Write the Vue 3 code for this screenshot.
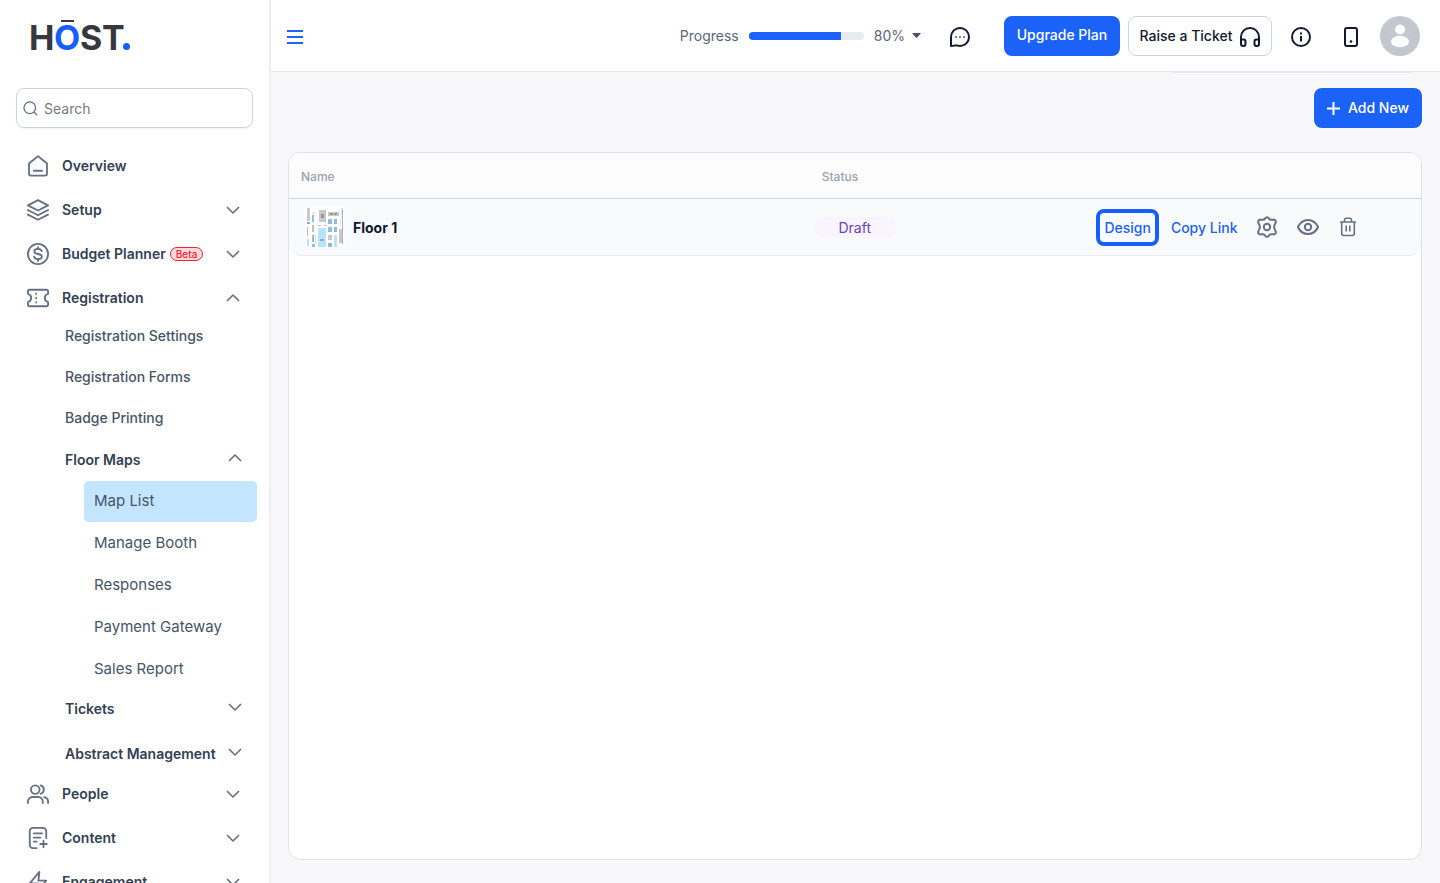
<template>
  <div class="layout">
    <aside class="sidebar">
      <a class="logo" href="#" aria-label="HOST">
        <svg width="120" height="60" viewBox="0 0 120 60">
          <g font-family="Inter, sans-serif" font-size="34" font-weight="700" fill="#363840">
            <text x="9" y="50">H</text>
            <text x="34" y="50" fill="#155eff">O</text>
            <text x="60" y="50">S</text>
            <text x="82" y="50">T</text>
          </g>
          <rect x="41" y="20" width="13" height="2" fill="#363840" />
          <circle cx="106.500" cy="46.500" r="3.500" fill="#155eff" />
        </svg>
      </a>

      <label class="search">
        <svg class="search-icon" viewBox="0 0 16 16"><circle cx="7.2" cy="7.2" r="6.2" /><path d="M12 12l2.6 2.6" /></svg>
        <input type="search" placeholder="Search" aria-label="Search">
      </label>

      <nav class="menu">
        <template v-for="item in menu" :key="item.name">
          <button class="menu-item" type="button">
            <svg class="menu-icon" viewBox="0 0 24 24"><path v-for="d in item.icon" :key="d" :d="d" /></svg>
            <span class="menu-name">{{ item.name }}</span>
            <span v-if="item.beta" class="beta">Beta</span>
            <svg v-if="!item.single" class="chevron" :class="{ open: item.children }" viewBox="0 0 14 8"><path d="M1 1l6 6 6-6" /></svg>
          </button>
          <div v-if="item.children" class="sub-menu">
            <template v-for="sub in item.children" :key="sub.name">
              <button v-if="sub.group" class="sub-group" type="button">
                <span>{{ sub.name }}</span>
                <svg class="chevron" :class="{ open: sub.children }" viewBox="0 0 14 8"><path d="M1 1l6 6 6-6" /></svg>
              </button>
              <a v-else class="sub-link" href="#">{{ sub.name }}</a>
              <div v-if="sub.children" class="nested">
                <a
                  v-for="name in sub.children"
                  :key="name"
                  href="#"
                  class="nested-link"
                  :class="{ active: name === current }"
                >{{ name }}</a>
              </div>
            </template>
          </div>
        </template>
      </nav>
    </aside>

    <div class="main">
      <header class="topbar">
        <button class="icon-btn burger" type="button" aria-label="Toggle menu">
          <svg width="16" height="14" viewBox="0 0 16 14"><path d="M0 1h16M0 7h16M0 13h16" /></svg>
        </button>

        <div class="progress">
          <span>Progress</span>
          <div class="progress-track">
            <div class="progress-bar" :style="{ width: progress + '%' }"></div>
          </div>
          <span>{{ progress }}%</span>
          <button class="icon-btn caret" type="button" aria-label="Show progress">
            <svg width="9" height="5" viewBox="0 0 9 5"><path d="M0.6 0h7.8q.8 0 .3.6L5.1 4.6q-.6.6-1.2 0L.3.6Q-.2 0 .6 0z" /></svg>
          </button>
        </div>

        <button class="icon-btn chat" type="button" aria-label="Messages">
          <svg width="22" height="22" viewBox="0 0 22 22">
            <path d="M2 20V11a9 9 0 1 1 9 9c-2 0-3-.9-4.600-.6C5 19.600 3.500 20 2 20z" />
            <path class="dots" d="M6.300 11h1.400M10.300 11h1.400M14.300 11h1.400" />
          </svg>
        </button>

        <button class="btn primary upgrade" type="button">Upgrade Plan</button>
        <button class="btn ticket" type="button">
          Raise a Ticket
          <svg width="20" height="20" viewBox="0 0 20 20">
            <path d="M1 15V10a9 9 0 0 1 18 0v5" />
            <path d="M1 12.500h2.500a2 2 0 0 1 2 2V17a2 2 0 0 1-2 2H3a2 2 0 0 1-2-2zM19 12.500h-2.500a2 2 0 0 0-2 2V17a2 2 0 0 0 2 2h.5a2 2 0 0 0 2-2z" />
          </svg>
        </button>
        <button class="icon-btn info" type="button" aria-label="Information">
          <svg width="22" height="22" viewBox="0 0 22 22"><circle cx="11" cy="11" r="9" /><path d="M11 10v5.500M11 6.500v2" /></svg>
        </button>
        <button class="icon-btn mobile" type="button" aria-label="Mobile preview">
          <svg width="14" height="20" viewBox="0 0 14 20"><rect x="1" y="1" width="12" height="18" rx="2" /><path d="M7 14.500v.01" stroke-width="2.600" stroke-linecap="round" /></svg>
        </button>
        <button class="icon-btn avatar" type="button" aria-label="Account">
          <svg width="40" height="40" viewBox="0 0 40 40">
            <circle cx="20" cy="20" r="20" fill="#c5c7cf" />
            <circle cx="20" cy="13.500" r="5" fill="#fff" />
            <ellipse cx="20" cy="25.500" rx="9" ry="5.700" fill="#fff" />
          </svg>
        </button>
      </header>

      <main class="content">
        <div class="tab-edge"></div>
        <div class="actions-bar">
          <button class="btn primary add" type="button">
            <svg width="13" height="13" viewBox="0 0 13 13"><path d="M6.500 0v13M0 6.500h13" /></svg>
            Add New
          </button>
        </div>

        <section class="panel">
          <table>
            <thead>
              <tr>
                <th class="col-name">Name</th>
                <th class="col-status">Status</th>
                <th class="col-actions" aria-label="Actions"></th>
              </tr>
            </thead>
            <tbody>
              <tr v-for="map in maps" :key="map.name">
                <td>
                  <div class="map-name">
                    <svg class="thumb" viewBox="0 0 40 40">
                      <rect width="40" height="40" rx="3" fill="#fff" />
                      <rect
                        v-for="(b, i) in blocks"
                        :key="i"
                        :x="b[0]"
                        :y="b[1]"
                        :width="b[2]"
                        :height="b[3]"
                        :fill="b[4]"
                      />
                    </svg>
                    <span class="map-title">{{ map.name }}</span>
                  </div>
                </td>
                <td><span class="status">{{ map.status }}</span></td>
                <td>
                  <div class="row-actions">
                    <a class="design" href="#">Design</a>
                    <a class="copy" href="#">Copy Link</a>
                    <button class="icon-btn row-icon" type="button" aria-label="Settings">
                      <svg width="22" height="22" viewBox="0 0 22 22">
                        <path d="M9.200 2.200a2.100 2.100 0 0 1 3.600 0c.6 1.200 1.500 1.700 2.800 1.600l1.700-.1a2 2 0 0 1 2.500 2.300c-.1 1-.8 1.700-1.200 2.800-.5 1.300-.5 3.100 0 4.400.4 1.100 1.100 1.800 1.200 2.800a2 2 0 0 1-2.500 2.300l-1.700-.1c-1.300-.1-2.200.4-2.800 1.600a2.100 2.100 0 0 1-3.600 0c-.6-1.200-1.500-1.700-2.800-1.600l-1.700.1a2 2 0 0 1-2.500-2.300c.1-1 .8-1.700 1.200-2.800.5-1.300.5-3.100 0-4.400-.4-1.100-1.100-1.800-1.200-2.800a2 2 0 0 1 2.500-2.300l1.700.1c1.300.1 2.200-.4 2.800-1.600z" />
                        <circle cx="11" cy="11" r="3.200" />
                      </svg>
                    </button>
                    <button class="icon-btn row-icon" type="button" aria-label="Preview">
                      <svg width="22" height="22" viewBox="0 0 22 22">
                        <path d="M.9 11C3 6.400 6.500 3.900 11 3.900S19 6.400 21.100 11C19 15.600 15.500 18.100 11 18.100S3 15.600.9 11z" />
                        <circle cx="11" cy="11" r="3.200" />
                      </svg>
                    </button>
                    <button class="icon-btn row-icon trash" type="button" aria-label="Delete">
                      <svg width="20" height="22" viewBox="1 0 20 22">
                        <path d="M3 6h16M4.700 6v11.500a2 2 0 0 0 2 2h8.600a2 2 0 0 0 2-2V6M7.500 6V4a1.800 1.800 0 0 1 1.800-1.800h3.400A1.800 1.800 0 0 1 14.500 4v2M9.200 9.500v6M12.800 9.500v6" />
                      </svg>
                    </button>
                  </div>
                </td>
              </tr>
            </tbody>
          </table>
        </section>
      </main>
    </div>
  </div>
</template>

<script setup>
import { ref } from 'vue'

const progress = ref(80)
const current = ref('Map List')

const maps = ref([{ name: 'Floor 1', status: 'Draft' }])

const menu = [
  {
    name: 'Overview',
    single: true,
    icon: ['M2.200 9.200L12 1.200l9.800 8v11.300a2 2 0 0 1-2 2H4.200a2 2 0 0 1-2-2z', 'M7.500 17.200h9']
  },
  {
    name: 'Setup',
    icon: ['M12 1.200l11 5.800-11 5.600L1 7z', 'M1 12l11 5.700L23 12', 'M1 17l11 5.700L23 17']
  },
  {
    name: 'Budget Planner',
    beta: true,
    icon: [
      'M12 1a11 11 0 1 0 0 22 11 11 0 1 0 0-22z',
      'M16 8.800C15.600 7.200 14.200 6.400 12 6.400c-2.300 0-4 1-4 2.800 0 4 8.200 1.600 8.200 5.600 0 1.900-1.800 2.900-4.200 2.900-2.400 0-4-1-4.300-2.800',
      'M12 4.500v2M12 17.500v2'
    ]
  },
  {
    name: 'Registration',
    icon: [
      'M1 5A2 2 0 0 1 3 3h18a2 2 0 0 1 2 2v2.600a4.500 4.500 0 0 0 0 8.800V19a2 2 0 0 1-2 2H3a2 2 0 0 1-2-2v-2.600a4.500 4.500 0 0 0 0-8.800z',
      'M10 7v.5M10 11.700v.6M10 16.500v.5'
    ],
    children: [
      { name: 'Registration Settings' },
      { name: 'Registration Forms' },
      { name: 'Badge Printing' },
      {
        name: 'Floor Maps',
        group: true,
        children: ['Map List', 'Manage Booth', 'Responses', 'Payment Gateway', 'Sales Report']
      },
      { name: 'Tickets', group: true },
      { name: 'Abstract Management', group: true }
    ]
  },
  {
    name: 'People',
    icon: [
      'M9 2.500a4.700 4.700 0 1 0 0 9.400 4.700 4.700 0 1 0 0-9.400z',
      'M1 21.800v-1.500a5 5 0 0 1 5-5h6.200a5 5 0 0 1 5 5v1.500',
      'M15 2.700a4.700 4.700 0 0 1 0 9',
      'M18.800 15.400a5 5 0 0 1 4.200 4.900v1.500'
    ]
  },
  {
    name: 'Content',
    icon: [
      'M10.500 23H6.500a3.500 3.500 0 0 1-3.500-3.500v-15A3.500 3.500 0 0 1 6.500 1h11A3.500 3.500 0 0 1 21 4.500V12',
      'M7.500 7h9M7.500 11.500h7M7.500 16h3',
      'M18 15v7M14.500 18.500h7'
    ]
  },
  {
    name: 'Engagement',
    icon: ['M13.500 1L3 13.500h8.500L10.500 23 21 10.500h-8.500z']
  }
]

// x, y, width, height, fill
const grey = '#c9c9c9'
const light = '#e4e4e4'
const blue = '#b9e2fb'
const mid = '#8fbfdc'
const blocks = [
  [2, 1, 3, 13, grey], [2, 15, 3, 2, '#a5a5a5'], [2, 20, 1, 9, '#b7b7b7'], [2, 32, 2, 7, blue],
  [7, 5, 3, 2, light], [7, 8, 2, 7, mid], [7, 18, 2, 7, '#d3b7c2'], [7, 28, 2, 7, mid], [7, 37, 3, 3, mid],
  [14, 3, 7, 12, grey], [16, 7, 3, 4, '#969696'], [12, 18, 4, 1, grey], [19, 18, 3, 1, grey],
  [13, 21, 8, 19, blue], [15, 32, 4, 2, '#8fb4c9'], [10, 28, 1, 9, light],
  [23, 5, 11, 4, grey], [25, 6, 3, 2, '#989898'], [29, 6, 3, 2, '#989898'],
  [23, 12, 4, 5, mid], [29, 12, 3, 5, mid], [23, 20, 4, 5, mid], [29, 20, 3, 5, mid],
  [23, 28, 4, 5, grey], [23, 36, 4, 4, mid], [29, 28, 3, 12, blue],
  [34, 22, 3, 14, grey], [35, 12, 1, 7, light], [36, 1, 2, 10, light], [37, 3, 1, 34, '#b2b2b2']
]
</script>

<style>
body {
  background: #f8f8fb;
}
</style>

<style scoped>
* {
  box-sizing: border-box;
}

.layout {
  display: flex;
  height: 100vh;
  overflow: hidden;
  font-family: Inter, "Liberation Sans", sans-serif;
  font-size: 14px;
  line-height: 20px;
  color: #344054;
}

button {
  font: inherit;
  color: inherit;
  background: none;
  border: 0;
  padding: 0;
  cursor: pointer;
}

a {
  color: inherit;
  text-decoration: none;
}

svg {
  display: block;
  flex-shrink: 0;
}

.sidebar {
  width: 271px;
  flex-shrink: 0;
  background: #fff;
  border-right: 2px solid #ececf2;
  overflow: hidden;
}

.logo {
  display: block;
  padding-left: 20px;
}

.search {
  display: flex;
  align-items: center;
  gap: 6px;
  height: 40px;
  margin: 28px 16px 16px;
  padding: 0 6px;
  border: 1px solid #d0d5dd;
  border-radius: 8px;
  box-shadow: 0 1px 2px rgba(16, 24, 40, 0.05);
}

.search-icon {
  width: 15px;
  height: 15px;
  fill: none;
  stroke: #667085;
  stroke-width: 1.4;
  stroke-linecap: round;
}

.search input {
  flex: 1;
  min-width: 0;
  font: inherit;
  border: 0;
  outline: 0;
  padding: 2px 0 0;
  background: none;
}

.search input::placeholder {
  color: #757982;
}

.menu-item {
  display: flex;
  align-items: center;
  width: 100%;
  height: 44px;
  padding: 0 29px 0 27px;
  font-weight: 600;
  text-align: left;
}

.menu-icon {
  width: 22px;
  height: 22px;
  margin-right: 13px;
  fill: none;
  stroke: #667085;
  stroke-width: 2;
  stroke-linecap: round;
  stroke-linejoin: round;
}

.beta {
  margin-left: 4px;
  padding: 0 5px;
  border: 1px solid #f5222d;
  border-radius: 7px;
  background: #ffd9dc;
  color: #f5222d;
  font-size: 10px;
  line-height: 12px;
  font-weight: 500;
}

.chevron {
  width: 14px;
  height: 8px;
  margin-left: auto;
  fill: none;
  stroke: #667085;
  stroke-width: 1.6;
  stroke-linejoin: round;
}

.chevron.open {
  transform: rotate(180deg);
}

.sub-menu {
  display: flex;
  flex-direction: column;
  margin-top: -4px;
}

.sub-link {
  padding: 10px 27px 11px 65px;
  color: #475467;
  font-weight: 500;
}

.sub-group {
  display: flex;
  align-items: center;
  height: 36px;
  padding: 0 27px 0 65px;
  font-weight: 600;
}

.sub-group .chevron {
  margin-bottom: 4px;
}

.sub-link + .sub-group {
  margin-top: 3px;
}

.sub-group + .sub-group {
  margin-top: 9px;
}

.nested {
  display: flex;
  flex-direction: column;
  gap: 1px;
  margin: 3px 12px 1px 84px;
}

.nested-link {
  padding: 10px 10px 11px;
  border-radius: 5px;
  color: #475467;
  font-size: 15px;
}

.nested-link.active {
  background: #c3e5ff;
}

.main {
  flex: 1;
  min-width: 0;
  display: flex;
  flex-direction: column;
}

.topbar {
  display: flex;
  align-items: center;
  height: 72px;
  flex-shrink: 0;
  padding: 0 20px 0 16px;
  background: #fff;
  border-bottom: 1px solid #e4e7ec;
}

.icon-btn {
  display: flex;
  align-items: center;
  justify-content: center;
  flex-shrink: 0;
}

.icon-btn svg {
  fill: none;
  stroke: #101832;
  stroke-width: 2;
  stroke-linejoin: round;
}

.icon-btn.burger svg {
  stroke: #1b62f8;
}

.progress {
  display: flex;
  align-items: center;
  gap: 10px;
  margin-left: auto;
  color: #5d6579;
}

.progress-track {
  width: 115px;
  height: 8px;
  border-radius: 4px;
  background: #e9ecef;
  overflow: hidden;
}

.progress-bar {
  height: 100%;
  background: #1b62f8;
}

.icon-btn.caret {
  margin-left: -3px;
}

.icon-btn.caret svg {
  fill: #475467;
  stroke: none;
}

.chat {
  margin-left: 28px;
}

.chat,
.info,
.mobile,
.burger {
  padding-top: 2px;
}

.icon-btn .dots {
  stroke-width: 1.5;
}

.btn {
  display: flex;
  align-items: center;
  justify-content: center;
  gap: 8px;
  height: 40px;
  border-radius: 8px;
  font-weight: 500;
  white-space: nowrap;
}

.btn svg {
  fill: none;
  stroke: currentColor;
  stroke-width: 2;
}

.primary {
  background: #1b62f8;
  color: #fff;
}

.upgrade {
  width: 116px;
  margin-left: 33px;
  padding-bottom: 2px;
}

.ticket {
  width: 144px;
  margin-left: 8px;
  border: 1px solid #d0d5dd;
  color: #101832;
}

.ticket svg {
  margin-top: 2px;
}

.info {
  margin-left: 18px;
}

.mobile {
  margin-left: 32px;
}

.icon-btn.avatar {
  margin-left: 22px;
}

.icon-btn.avatar svg {
  stroke: none;
}

.content {
  flex: 1;
  min-height: 0;
  display: flex;
  flex-direction: column;
  padding: 0 18px 23px 17px;
}

.tab-edge {
  align-self: flex-end;
  width: 240px;
  height: 1px;
  margin-right: 10px;
  background: #e6ebf0;
}

.actions-bar {
  display: flex;
  justify-content: flex-end;
  margin: 15px 0 24px;
}

.add {
  width: 108px;
}

.panel {
  flex: 1;
  background: #fff;
  border: 1px solid #dfe2ea;
  border-radius: 12px;
  overflow: hidden;
}

table {
  width: 100%;
  table-layout: fixed;
  border-collapse: separate;
  border-spacing: 0;
}

th {
  height: 46px;
  padding: 2px 12px 0;
  background: #fcfcfd;
  border-bottom: 1px solid #d0d5dd;
  color: #98a2b3;
  font-size: 12px;
  font-weight: 500;
  text-align: left;
}

.col-name {
  width: 46%;
}

.col-status {
  width: 24%;
}

td {
  height: 57px;
  padding: 0 12px;
  background: #f9fafc;
  border-bottom: 1px solid #eaecf0;
}

td:first-child {
  border-bottom-left-radius: 12px;
}

td:last-child {
  border-bottom-right-radius: 12px;
}

.map-name {
  display: flex;
  align-items: center;
  gap: 8px;
  padding: 0 4px;
  color: #101832;
  font-weight: 700;
}

.map-title {
  padding-top: 2px;
}

.thumb {
  width: 40px;
  height: 40px;
}

.status {
  display: inline-block;
  width: 82px;
  margin-left: -8px;
  padding-top: 1px;
  border-radius: 10px;
  background: #f9f5ff;
  color: #6941c6;
  text-align: center;
}

.row-actions {
  display: flex;
  align-items: center;
  color: #1b62f8;
  font-weight: 500;
}

.design {
  margin-left: 3px;
  padding: 5px 4px 4px;
  border: 4px solid #155eff;
  border-radius: 8px;
}

.copy {
  margin: 1px 8px 0 12px;
}

.row-icon {
  margin-left: 11px;
}

.row-icon + .row-icon {
  margin-left: 19px;
}

.icon-btn.row-icon svg {
  stroke: #667085;
}

.icon-btn.trash svg {
  stroke-width: 1.6;
}
</style>
